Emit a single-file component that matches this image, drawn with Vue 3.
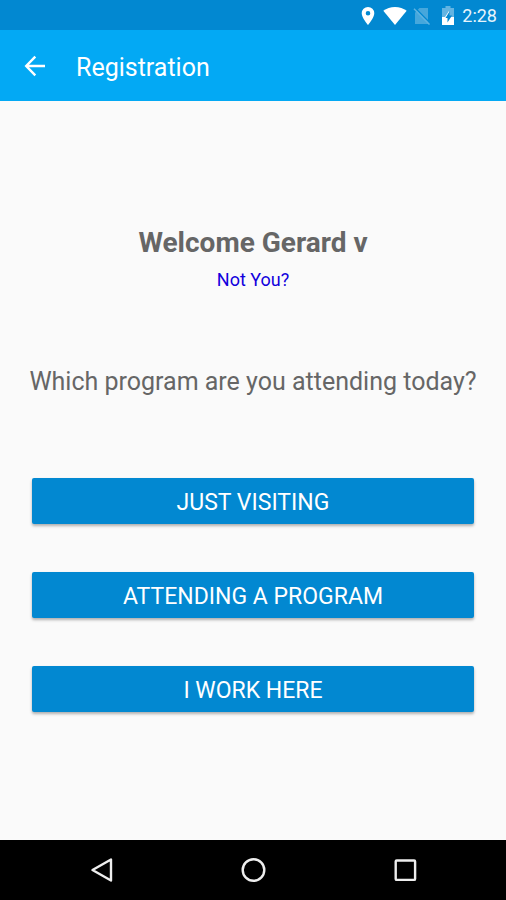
<script setup>
/**
 * App.vue - 签到登记页
 *
 * 顶部状态栏、标题栏、欢迎信息、项目选择按钮和底部导航栏
 */
import { ref } from 'vue'

const time = ref('2:28')
const userName = ref('Gerard v')
const selected = ref('')

const programs = [
  { id: 'visiting', label: 'Just Visiting' },
  { id: 'attending', label: 'Attending a Program' },
  { id: 'work', label: 'I Work Here' }
]

const selectProgram = (id) => {
  selected.value = id
}
</script>

<template>
  <div class="screen">
    <div class="status-bar">
      <svg class="icon-pin" width="14" height="18" viewBox="0 0 14 18" aria-hidden="true">
        <path fill="#fff" fill-rule="evenodd" d="M7 0a6.3 6.3 0 0 0-6.3 6.3C.7 11 7 18 7 18s6.3-7 6.3-11.7A6.3 6.3 0 0 0 7 0zm0 4a2.3 2.3 0 1 1 0 4.6A2.3 2.3 0 0 1 7 4z" />
      </svg>
      <svg class="icon-wifi" width="24" height="18" viewBox="0 0 24 18" aria-hidden="true">
        <path fill="#fff" d="M12 18 .3 3.8C3.5 1.3 7.6 0 12 0s8.5 1.3 11.7 3.8z" />
      </svg>
      <svg class="icon-sim" width="18" height="18" viewBox="0 0 18 18" aria-hidden="true">
        <path fill="#46a7dc" d="M6.5 1H15v16H2V5.500z" />
        <path stroke="#0288d1" stroke-width="1.5" d="M2.400 1.200 17.600 16.600" />
        <path stroke="#5fb3e1" stroke-width="1.5" d="M1 1.800 16.500 17.500" />
      </svg>
      <svg class="icon-battery" width="14" height="20" viewBox="0 0 14 20" aria-hidden="true">
        <path fill="#62b4e2" d="M4.500 0h5v2H13v9H1V2h3.500z" />
        <path fill="#fff" d="M1 11h12v8H1z" />
        <path fill="#fff" d="M8 5 4 11h4z" />
        <path fill="#0288d1" d="M8.500 5.500V9.500h2.500l-4.500 7v-4.500h-2z" />
      </svg>
      <span class="time">{{ time }}</span>
    </div>

    <header class="app-bar">
      <button class="back" type="button" aria-label="Back">
        <svg width="22" height="22" viewBox="0 0 22 22" fill="none" stroke="#fff" stroke-width="2.4">
          <path d="M11.3 1.7 2.2 11l9.1 9.3M2.4 11H21" />
        </svg>
      </button>
      <h1 class="title">Registration</h1>
    </header>

    <main class="content">
      <h2 class="welcome">Welcome {{ userName }}</h2>
      <a class="not-you" href="#">Not You?</a>
      <p class="question">Which program are you attending today?</p>
      <div class="programs">
        <button
          v-for="program in programs"
          :key="program.id"
          class="program"
          type="button"
          :aria-pressed="selected === program.id"
          @click="selectProgram(program.id)"
        >
          {{ program.label }}
        </button>
      </div>
    </main>

    <nav class="nav-bar">
      <button class="nav-button" type="button" aria-label="Back">
        <svg width="24" height="26" viewBox="0 0 24 26" fill="none" stroke="#eee" stroke-width="2.4" stroke-linejoin="round">
          <path d="M22 2.5v21L3.500 13z" />
        </svg>
      </button>
      <button class="nav-button" type="button" aria-label="Home">
        <svg width="26" height="26" viewBox="0 0 26 26" fill="none" stroke="#eee" stroke-width="2.4">
          <circle cx="13.5" cy="13" r="10.8" />
        </svg>
      </button>
      <button class="nav-button" type="button" aria-label="Recent apps">
        <svg width="26" height="26" viewBox="0 0 26 26" fill="none" stroke="#eee" stroke-width="2.4">
          <rect x="3.7" y="3.5" width="19.4" height="19.4" rx="1" />
        </svg>
      </button>
    </nav>
  </div>
</template>

<style>
body {
  background: #fafafa;
}
</style>

<style scoped>
.screen {
  display: flex;
  flex-direction: column;
  min-height: 100vh;
  font-family: Roboto, "Liberation Sans", sans-serif;
  background: #fafafa;
}

.status-bar {
  display: flex;
  align-items: center;
  justify-content: flex-end;
  height: 30px;
  padding: 2px 9px 0 0;
  box-sizing: border-box;
  background: #0288d1;
}

.icon-pin {
  margin-right: 8px;
}

.icon-wifi {
  margin-right: 6px;
}

.icon-sim {
  margin-right: 10px;
}

.icon-battery {
  margin-right: 7px;
}

.time {
  font-size: 18px;
  line-height: 24px;
  color: #e6f4fc;
}

.app-bar {
  display: flex;
  align-items: center;
  height: 71px;
  padding-left: 24px;
  box-sizing: border-box;
  background: #03a9f4;
}

.back,
.nav-button {
  display: flex;
  align-items: center;
  justify-content: center;
  padding: 0;
  border: none;
  background: none;
  cursor: pointer;
}

.title {
  margin: 4px 0 0 30px;
  font-size: 25px;
  line-height: 32px;
  font-weight: 400;
  color: #fff;
}

.content {
  display: flex;
  flex: 1;
  flex-direction: column;
  align-items: center;
  padding: 124px 32px;
}

.welcome {
  margin: 0;
  font-size: 28px;
  line-height: 36px;
  font-weight: 700;
  color: #666;
}

.not-you {
  margin-top: 7px;
  font-size: 18px;
  line-height: 24px;
  color: #1100dd;
  text-decoration: none;
}

.question {
  margin: 74px -16px 0;
  font-size: 25px;
  line-height: 32px;
  color: #666;
  text-align: center;
}

.programs {
  display: flex;
  flex-direction: column;
  align-self: stretch;
  gap: 48px;
  margin-top: 80px;
}

.program {
  height: 46px;
  padding: 4px 16px 0;
  border: none;
  border-radius: 2px;
  font-family: inherit;
  font-size: 23px;
  line-height: 32px;
  text-transform: uppercase;
  color: #fff;
  background: #0288d1;
  box-shadow: 0 2px 3px rgba(0, 0, 0, 0.3);
  cursor: pointer;
}

.nav-bar {
  display: flex;
  justify-content: center;
  height: 60px;
  background: #000;
}

.nav-button {
  width: 30%;
}
</style>
